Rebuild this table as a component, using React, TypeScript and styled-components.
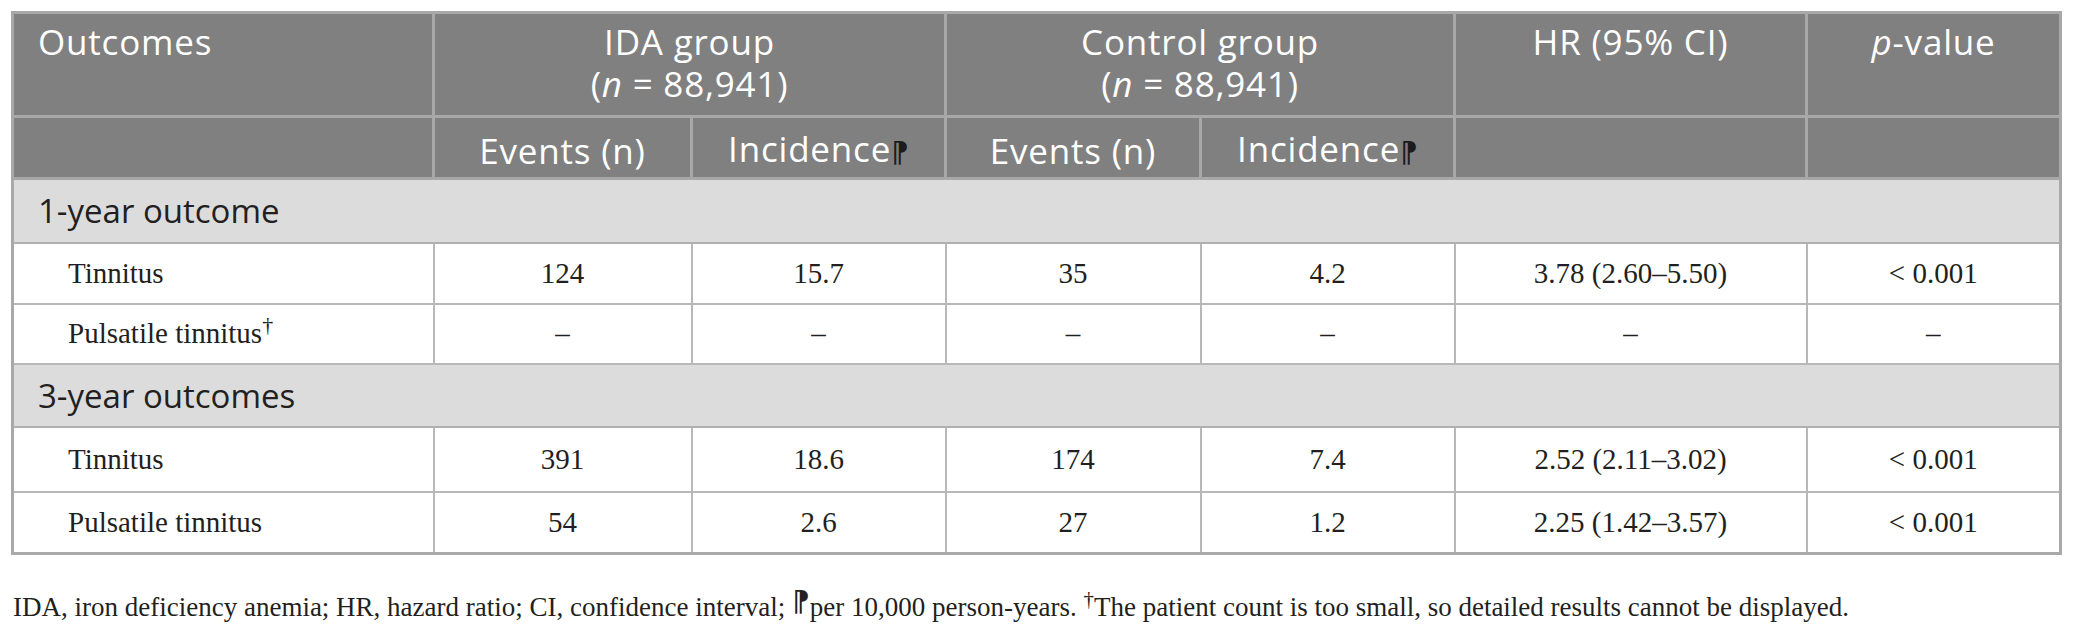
import styled, { createGlobalStyle } from 'styled-components';

const GlobalStyle = createGlobalStyle`
    body {
        margin: 0;
        background: #ffffff;
    }
`

const Page = styled.div`
    padding: 11px 0 0 11px;
`

const Table = styled.table`
    border-collapse: collapse;
    table-layout: fixed;
    width: 2048px;
    border: 3px solid #a9a9a9;
`

const HeadRow = styled.tr<{ $h: number }>`
    height: ${p => p.$h}px;
    background: #808080;
`

const HeadCell = styled.th<{ $align?: string; $valign?: string }>`
    border: 3px solid #a8a8a8;
    padding: 7px 24px 0;
    text-align: ${p => p.$align || 'center'};
    vertical-align: ${p => p.$valign || 'top'};
    font-family: "Open Sans", sans-serif;
    font-weight: 400;
    font-size: 35px;
    letter-spacing: 0.8px;
    line-height: 42px;
    color: #ffffff;
`

const Mark = styled.span`
    font-family: "DejaVu Sans", sans-serif;
    color: #1c1c1c;
    font-size: 28px;
    letter-spacing: 0;
`

const SectionRow = styled.tr<{ $h: number }>`
    height: ${p => p.$h}px;
    background: #dcdcdc;
`

const SectionCell = styled.td`
    border: 2px solid #b0b0b0;
    padding: 0 24px;
    font-family: "Open Sans", sans-serif;
    font-size: 33px;
    color: #231f20;
    vertical-align: middle;
`

const DataRow = styled.tr<{ $h: number }>`
    height: ${p => p.$h}px;
`

const DataCell = styled.td<{ $first?: boolean }>`
    border: 2px solid #b8b8b8;
    padding: 0 0 0 ${p => (p.$first ? '54px' : '0')};
    text-align: ${p => (p.$first ? 'left' : 'center')};
    vertical-align: middle;
    font-family: "Liberation Serif", serif;
    font-size: 29px;
    color: #231f20;
    sup {
        font-size: 22px;
        vertical-align: 11px;
        line-height: 0;
    }
`

const Note = styled.p`
    margin: 37px 0 0 2px;
    font-family: "Liberation Serif", serif;
    font-size: 27px;
    color: #231f20;
    sup {
        font-size: 21px;
        vertical-align: 10px;
        line-height: 0;
    }
`

const NoteMark = styled.span`
    font-family: "DejaVu Sans", sans-serif;
    font-size: 28px;
    vertical-align: 5px;
    line-height: 0;
`

const widths = [421, 258, 254, 255, 254, 352, 254]

const sections = [
    {
        title: '1-year outcome',
        h: 64,
        rows: [
            { name: 'Tinnitus', h: 61, dag: false, v: ['124', '15.7', '35', '4.2', '3.78 (2.60–5.50)', '< 0.001'] },
            { name: 'Pulsatile tinnitus', h: 60, dag: true, v: ['–', '–', '–', '–', '–', '–'] },
        ],
    },
    {
        title: '3-year outcomes',
        h: 63,
        rows: [
            { name: 'Tinnitus', h: 65, dag: false, v: ['391', '18.6', '174', '7.4', '2.52 (2.11–3.02)', '< 0.001'] },
            { name: 'Pulsatile tinnitus', h: 62, dag: false, v: ['54', '2.6', '27', '1.2', '2.25 (1.42–3.57)', '< 0.001'] },
        ],
    },
]

export default function App() {
    return (
        <Page>
            <GlobalStyle />
            <Table>
                <colgroup>
                    {widths.map((w, i) => <col key={i} style={{ width: w }} />)}
                </colgroup>
                <thead>
                    <HeadRow $h={104}>
                        <HeadCell $align="left">Outcomes</HeadCell>
                        <HeadCell colSpan={2}>IDA group<br />(<i>n</i> = 88,941)</HeadCell>
                        <HeadCell colSpan={2}>Control group<br />(<i>n</i> = 88,941)</HeadCell>
                        <HeadCell>HR (95% CI)</HeadCell>
                        <HeadCell><i>p</i>-value</HeadCell>
                    </HeadRow>
                    <HeadRow $h={62}>
                        <HeadCell $valign="middle"></HeadCell>
                        <HeadCell $valign="middle">Events (n)</HeadCell>
                        <HeadCell $valign="middle">Incidence<Mark>⁋</Mark></HeadCell>
                        <HeadCell $valign="middle">Events (n)</HeadCell>
                        <HeadCell $valign="middle">Incidence<Mark>⁋</Mark></HeadCell>
                        <HeadCell $valign="middle"></HeadCell>
                        <HeadCell $valign="middle"></HeadCell>
                    </HeadRow>
                </thead>
                <tbody>
                    {sections.map(s => (
                        <>
                            <SectionRow key={s.title} $h={s.h}>
                                <SectionCell colSpan={7}>{s.title}</SectionCell>
                            </SectionRow>
                            {s.rows.map(r => (
                                <DataRow key={s.title + r.name} $h={r.h}>
                                    <DataCell $first>{r.name}{r.dag && <sup>†</sup>}</DataCell>
                                    {r.v.map((x, i) => <DataCell key={i}>{x}</DataCell>)}
                                </DataRow>
                            ))}
                        </>
                    ))}
                </tbody>
            </Table>
            <Note>
                IDA, iron deficiency anemia; HR, hazard ratio; CI, confidence interval; <NoteMark>⁋</NoteMark>per 10,000 person-years. <sup>†</sup>The patient count is too small, so detailed results cannot be displayed.
            </Note>
        </Page>
    )
}
